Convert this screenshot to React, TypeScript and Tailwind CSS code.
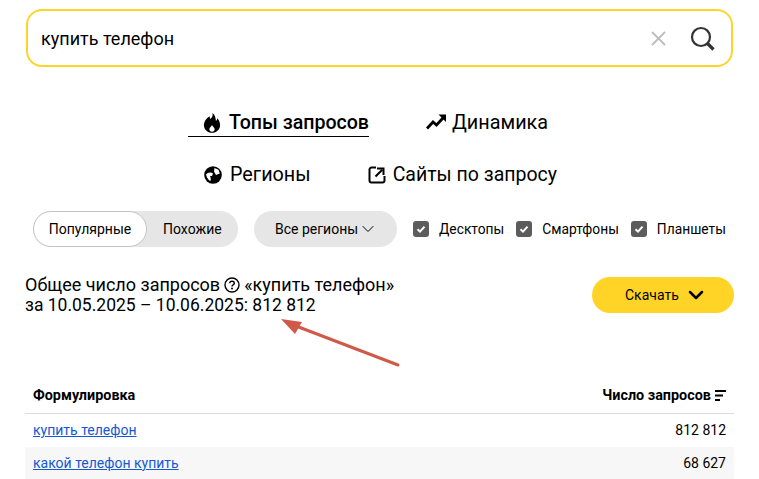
import { ChevronDown } from "lucide-react";

function Check({ label }: { label: string }) {
  return (
    <label className="flex items-center gap-[10px]">
      <span className="flex h-4 w-4 items-center justify-center rounded-[3px] bg-[#5c5c5c]">
        <svg width="12" height="12" viewBox="0 0 12 12" fill="none">
          <path d="M2.5 6.2 5 8.6 9.5 3.6" stroke="#fff" strokeWidth="2" />
        </svg>
      </span>
      <span className="text-[13.8px]">{label}</span>
    </label>
  );
}

export default function App() {
  return (
    <div className="relative h-[479px] w-[759px] overflow-hidden bg-white font-['Roboto',sans-serif] text-black">
      <div className="px-[26px] pt-[9px]">
        {/* поиск */}
        <div className="flex h-[58px] w-[707px] items-center justify-between rounded-[16px] border-2 border-[#ffd42a] pl-[13px] pr-[15px]">
          <span className="text-[18px]">купить телефон</span>
          <div className="flex items-center gap-[24px]">
            <svg width="15" height="15" viewBox="0 0 15 15" fill="none">
              <path d="M1 1 14 14M14 1 1 14" stroke="#bdbdbd" strokeWidth="1.8" />
            </svg>
            <svg width="26" height="26" viewBox="0 0 26 26" fill="none">
              <circle cx="11" cy="12" r="9" stroke="#333" strokeWidth="2.2" />
              <path d="M17.5 18.5 23.5 24.500" stroke="#333" strokeWidth="3.2" />
            </svg>
          </div>
        </div>
      </div>

      {/* вкладки */}
      <div className="mt-[36px] flex pl-[188px]">
        <div className="flex h-[34px] w-[181px] items-start justify-end gap-[8px] border-b border-black pt-[7px]">
          <svg className="mt-[3px]" width="18" height="20" viewBox="0 0 18 21" fill="#000">
            <path d="M9.5 0c.8 3-.6 4.7-2 6.3C6.800 5.500 6.400 4.500 6.400 3.300 3 5.500 0.500 8.800.5 12.500c0 4.800 3.800 8.200 8.500 8.200s8.500-3.400 8.500-8.200c0-2.700-1.100-5.100-2.900-7.100-.1 1.300-.6 2.300-1.500 3C13 5 12 2 9.500 0ZM9 12.500c.4 1.500 2.800 2.600 2.800 4.600 0 1.500-1.200 2.600-2.800 2.600s-2.800-1.100-2.800-2.600c0-2 2.400-2.900 2.800-4.600Z" fillRule="evenodd" />
          </svg>
          <span className="text-[19.6px] font-medium leading-[26px]">Топы запросов</span>
        </div>
        <div className="ml-[57px] flex h-[34px] items-start gap-[6px] pt-[7px]">
          <svg className="mt-[4px]" width="20" height="16" viewBox="0 0 20 16" fill="none">
            <path d="M1 14.500 7 8l3.500 3L17 4" stroke="#000" strokeWidth="2.800" />
            <path d="M12.500 .5H20V8Z" fill="#000" />
          </svg>
          <span className="text-[19.800px] leading-[26px]">Динамика</span>
        </div>
      </div>

      <div className="mt-[23px] flex pl-[204px]">
        <div className="flex items-center gap-[8px]">
          <svg width="18" height="18" viewBox="0 0 18 18" fill="none">
            <circle cx="9" cy="9" r="8.800" fill="#000" />
            <path d="M2 8.500C3.500 6.500 7 5.500 9 7.500L8 10H6.200L7 14.500H5.200L3 11.500ZM10.500 2 14.500 3.800 15.800 7.500 12 9 10 5.500Z" fill="#fff" />
          </svg>
          <span className="text-[19.800px] leading-[30px]">Регионы</span>
        </div>
        <div className="ml-[57px] flex items-center gap-[7px]">
          <svg width="18" height="18" viewBox="0 0 18 18" fill="none">
            <path d="M8 1.500H3.500a2 2 0 0 0-2 2v11a2 2 0 0 0 2 2h11a2 2 0 0 0 2-2V10" stroke="#000" strokeWidth="2" />
            <path d="M7.500 10.500 14 4M9 2.500h6.500V9" stroke="#000" strokeWidth="2" />
          </svg>
          <span className="text-[19.500px] leading-[30px]">Сайты по запросу</span>
        </div>
      </div>

      {/* фильтры */}
      <div className="mt-[21px] flex items-center pl-[33px]">
        <div className="flex h-[36px] w-[205px] items-center rounded-full bg-[#e6e6e6] text-[14px]">
          <span className="flex h-[36px] w-[114px] items-center justify-center rounded-full border border-[#c4c4c4] bg-white">Популярные</span>
          <span className="ml-[16px]">Похожие</span>
        </div>
        <div className="ml-[16px] flex h-[36px] w-[143px] items-center rounded-full bg-[#e6e6e6] pl-[21px] text-[14px]">
          Все регионы
          <ChevronDown size={20} strokeWidth={1.2} />
        </div>
        <div className="ml-[16px] flex items-center gap-[12px]">
          <Check label="Десктопы" />
          <Check label="Смартфоны" />
          <Check label="Планшеты" />
        </div>
      </div>

      {/* итог */}
      <div className="mt-[27px] flex items-start justify-between px-[25px]">
        <div className="leading-[21px]">
          <div className="flex items-center gap-[4px] text-[18px]">
            Общее число запросов
            <svg width="16" height="16" viewBox="0 0 16 16" fill="none">
              <circle cx="8" cy="8" r="7" stroke="#000" strokeWidth="1.400" />
              <path d="M5.700 6.300C5.700 5 6.700 4.200 8 4.200s2.300.8 2.300 2c0 1.700-2.300 1.700-2.300 3.300" stroke="#000" strokeWidth="1.400" />
              <circle cx="8" cy="11.600" r="1" fill="#000" />
            </svg>
            «купить телефон»
          </div>
          <div className="text-[17.500px]">за 10.05.2025 – 10.06.2025: 812 812</div>
        </div>
        <div className="mt-[3px] flex h-[36px] w-[142px] items-center rounded-full bg-[#ffd426] pl-[33px] text-[14px]">
          Скачать
          <ChevronDown className="ml-[5px]" size={24} strokeWidth={2.5} />
        </div>
      </div>

      {/* таблица */}
      <div className="mx-[25px] mt-[62px] text-[14px]">
        <div className="flex h-[36px] items-center justify-between border-b border-[#dcdcdc] px-[8px] pt-[1px] text-[14.4px] font-bold">
          <span>Формулировка</span>
          <span className="flex items-center gap-[4px]">
            Число запросов
            <svg width="11" height="11" viewBox="0 0 11 11" fill="#000">
              <rect x="0" y="0" width="11" height="2" />
              <rect x="0" y="4.500" width="8" height="2" />
              <rect x="0" y="9" width="5" height="2" />
            </svg>
          </span>
        </div>
        <div className="flex h-[33px] items-center justify-between px-[8px]">
          <a className="text-[#1558d6] underline">купить телефон</a>
          <span>812 812</span>
        </div>
        <div className="flex h-[32px] items-center justify-between bg-[#f7f7f7] px-[8px]">
          <a className="text-[#1558d6] underline">какой телефон купить</a>
          <span>68 627</span>
        </div>
      </div>

      {/* стрелка */}
      <svg className="absolute left-0 top-0" width="759" height="479" fill="none">
        <path d="M398 365 296 326" stroke="#d05a4a" strokeWidth="3" strokeLinecap="round" />
        <path d="M281 319 302 322 295 334Z" fill="#d05a4a" />
      </svg>
    </div>
  );
}
